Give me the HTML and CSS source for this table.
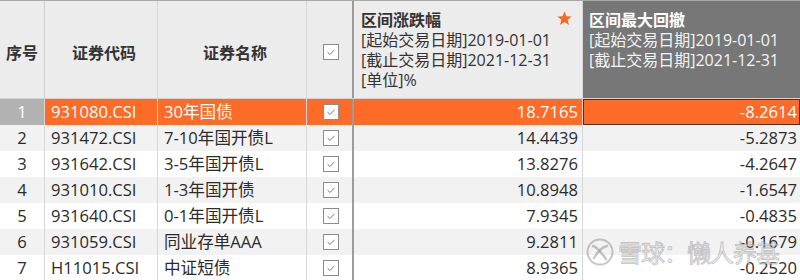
FILE: index.html
```html
<!DOCTYPE html>
<html lang="zh-CN">
<head>
<meta charset="utf-8">
<link rel="stylesheet" href="styles.css">
</head>
<body>
<div class="sheet">
  <div class="row head">
    <div class="cell c-idx hc">序号</div>
    <div class="cell c-code hc">证券代码</div>
    <div class="cell c-name hc">证券名称</div>
    <div class="cell c-chk hc"><span class="cb"><svg viewBox="0 0 16 16" width="16" height="16"><path d="M4.5 8.2 L7 10.5 L11.5 5.8" fill="none" stroke="#7a7a7a" stroke-width="1"/></svg></span></div>
    <div class="cell c-ret hl">
      <div class="ttl"><span>区间涨跌幅</span><svg class="star" viewBox="0 0 16 16" width="15" height="15"><polygon points="8,0.5 10.1,5.7 15.6,5.9 11.3,9.4 12.8,14.9 8,11.8 3.2,14.9 4.7,9.4 0.4,5.9 5.9,5.7" fill="#f26a22"/></svg></div>
      <div>[起始交易日期]2019-01-01</div>
      <div>[截止交易日期]2021-12-31</div>
      <div>[单位]%</div>
    </div>
    <div class="cell c-dd hl dark">
      <div class="ttl"><span>区间最大回撤</span></div>
      <div>[起始交易日期]2019-01-01</div>
      <div>[截止交易日期]2021-12-31</div>
    </div>
  </div>

  <div class="row data sel">
    <div class="cell c-idx">1</div>
    <div class="cell c-code">931080.CSI</div>
    <div class="cell c-name">30年国债</div>
    <div class="cell c-chk"><span class="cb"><svg viewBox="0 0 16 16" width="16" height="16"><path d="M4.5 8.2 L7 10.5 L11.5 5.8" fill="none" stroke="#7a7a7a" stroke-width="1"/></svg></span></div>
    <div class="cell c-ret num">18.7165</div>
    <div class="cell c-dd num focus">-8.2614</div>
  </div>
  <div class="row data even">
    <div class="cell c-idx">2</div>
    <div class="cell c-code">931472.CSI</div>
    <div class="cell c-name">7-10年国开债L</div>
    <div class="cell c-chk"><span class="cb"><svg viewBox="0 0 16 16" width="16" height="16"><path d="M4.5 8.2 L7 10.5 L11.5 5.8" fill="none" stroke="#7a7a7a" stroke-width="1"/></svg></span></div>
    <div class="cell c-ret num">14.4439</div>
    <div class="cell c-dd num">-5.2873</div>
  </div>
  <div class="row data">
    <div class="cell c-idx">3</div>
    <div class="cell c-code">931642.CSI</div>
    <div class="cell c-name">3-5年国开债L</div>
    <div class="cell c-chk"><span class="cb"><svg viewBox="0 0 16 16" width="16" height="16"><path d="M4.5 8.2 L7 10.5 L11.5 5.8" fill="none" stroke="#7a7a7a" stroke-width="1"/></svg></span></div>
    <div class="cell c-ret num">13.8276</div>
    <div class="cell c-dd num">-4.2647</div>
  </div>
  <div class="row data even">
    <div class="cell c-idx">4</div>
    <div class="cell c-code">931010.CSI</div>
    <div class="cell c-name">1-3年国开债</div>
    <div class="cell c-chk"><span class="cb"><svg viewBox="0 0 16 16" width="16" height="16"><path d="M4.5 8.2 L7 10.5 L11.5 5.8" fill="none" stroke="#7a7a7a" stroke-width="1"/></svg></span></div>
    <div class="cell c-ret num">10.8948</div>
    <div class="cell c-dd num">-1.6547</div>
  </div>
  <div class="row data">
    <div class="cell c-idx">5</div>
    <div class="cell c-code">931640.CSI</div>
    <div class="cell c-name">0-1年国开债L</div>
    <div class="cell c-chk"><span class="cb"><svg viewBox="0 0 16 16" width="16" height="16"><path d="M4.5 8.2 L7 10.5 L11.5 5.8" fill="none" stroke="#7a7a7a" stroke-width="1"/></svg></span></div>
    <div class="cell c-ret num">7.9345</div>
    <div class="cell c-dd num">-0.4835</div>
  </div>
  <div class="row data even">
    <div class="cell c-idx">6</div>
    <div class="cell c-code">931059.CSI</div>
    <div class="cell c-name">同业存单AAA</div>
    <div class="cell c-chk"><span class="cb"><svg viewBox="0 0 16 16" width="16" height="16"><path d="M4.5 8.2 L7 10.5 L11.5 5.8" fill="none" stroke="#7a7a7a" stroke-width="1"/></svg></span></div>
    <div class="cell c-ret num">9.2811</div>
    <div class="cell c-dd num">-0.1679</div>
  </div>
  <div class="row data">
    <div class="cell c-idx">7</div>
    <div class="cell c-code">H11015.CSI</div>
    <div class="cell c-name">中证短债</div>
    <div class="cell c-chk"><span class="cb"><svg viewBox="0 0 16 16" width="16" height="16"><path d="M4.5 8.2 L7 10.5 L11.5 5.8" fill="none" stroke="#7a7a7a" stroke-width="1"/></svg></span></div>
    <div class="cell c-ret num">8.9365</div>
    <div class="cell c-dd num">-0.2520</div>
  </div>
</div>

<div class="wm">
  <svg class="wm-logo" viewBox="0 0 28 28" width="28" height="28">
    <circle cx="14" cy="14" r="12.5" fill="none" stroke="rgba(150,150,150,0.55)" stroke-width="2"/>
    <path d="M7 8 C11 9 15 14 20 21" fill="none" stroke="rgba(150,150,150,0.55)" stroke-width="2.4" stroke-linecap="round"/>
    <path d="M21 8 C17 9 12 13 8 20" fill="none" stroke="rgba(150,150,150,0.55)" stroke-width="2.4" stroke-linecap="round"/>
  </svg>
  <span class="wm-text">雪球：懒人养基</span>
</div>
</body>
</html>
```

FILE: styles.css
```css
* { box-sizing: border-box; }
html, body { margin: 0; padding: 0; background: #ffffff; }
body {
  width: 800px;
  height: 280px;
  overflow: hidden;
  position: relative;
  font-family: "Open Sans", "Noto Sans CJK SC", sans-serif;
  font-size: 16px;
  color: #2b2b2b;
}
.sheet { display: flex; flex-direction: column; }
.row {
  display: grid;
  grid-template-columns: 45px 113px 149px 47px 229px 217px;
  height: 26px;
  background: #ffffff;
}
.row.data { font-size: 16.6px; }
.row.even { background: #f2f2f2; }
.row.sel { background: #fc6b28; color: #ffffff; }
.cell {
  border-right: 1px solid #d6d6d6;
  display: flex;
  align-items: center;
  white-space: nowrap;
  line-height: 20px;
  overflow: hidden;
}
.c-chk { border-right: 2px solid #9c9c9c; justify-content: center; padding-left: 2px; }
.c-dd { border-right: none; }
.c-idx { justify-content: center; }
.c-code, .c-name { padding-left: 6px; }
.num { justify-content: flex-end; padding-right: 4px; }
.c-dd.num { padding-right: 3px; }
.row.sel .c-idx { background: #b2b2b2; color: #ffffff; }
.focus { box-shadow: inset 0 0 0 1px #4e3323; }

.cb {
  width: 16px;
  height: 16px;
  background: #ffffff;
  border: 1px solid #8c8c8c;
  display: flex;
  align-items: center;
  justify-content: center;
}
.cb svg { display: block; flex: none; }

.head {
  height: 99px;
  background: #ececec;
  border-top: 1px solid #a8a8a8;
  border-bottom: 1px solid #d2d2d2;
}
.hc {
  justify-content: center;
  font-weight: bold;
  color: #333333;
  padding-top: 6px;
}
.head .c-idx { border-right-color: #cfcfcf; }
.head .c-chk { padding-top: 4px; }
.hl {
  flex-direction: column;
  align-items: stretch;
  justify-content: flex-start;
  padding: 9px 10px 0 7px;
  color: #333333;
}
.head .c-ret { border-right-color: #d6d6d6; }
.ttl {
  display: flex;
  justify-content: space-between;
  align-items: center;
  font-weight: bold;
}
.star { display: block; margin-top: -4px; }
.dark { background: #777777; color: #f4f4f4; padding-left: 6px; }
.dark .ttl { color: #ffffff; }

.wm {
  position: absolute;
  left: 586px;
  top: 237px;
  display: flex;
  align-items: center;
  gap: 4px;
  pointer-events: none;
}
.wm-logo { display: block; }
.wm-text {
  font-family: "Noto Sans CJK SC", sans-serif;
  font-size: 24px;
  line-height: 30px;
  letter-spacing: -1px;
  color: rgba(235, 235, 235, 0.55);
  -webkit-text-stroke: 1px rgba(140, 140, 140, 0.45);
}
```
